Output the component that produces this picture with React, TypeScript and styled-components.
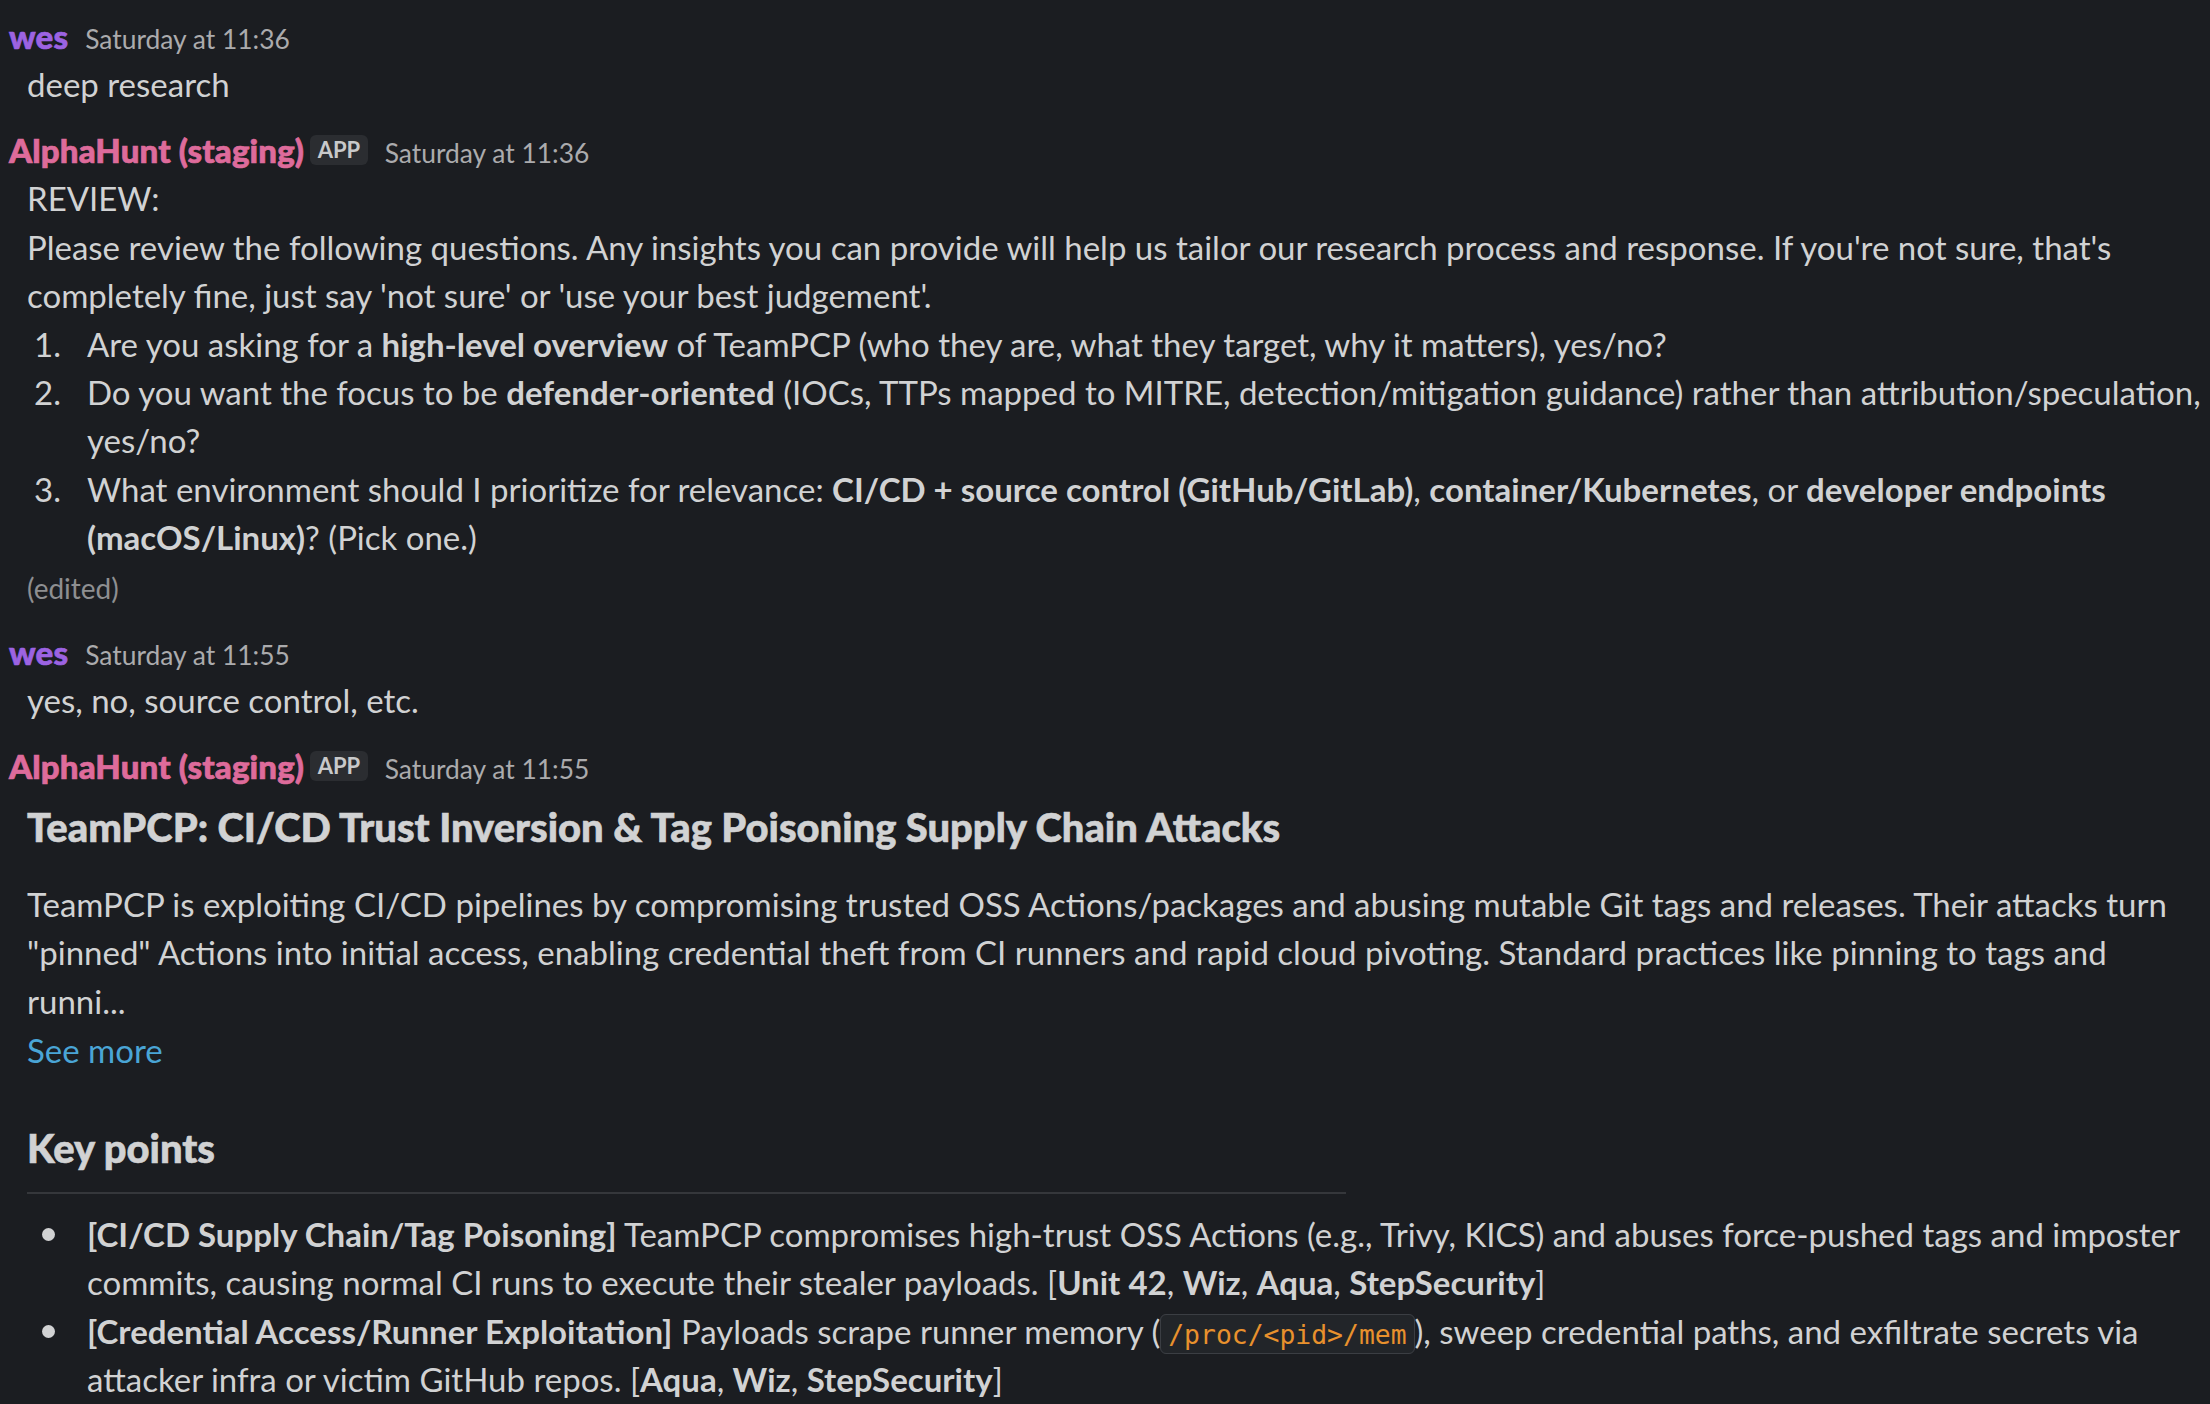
import React from "react";
import styled, { createGlobalStyle } from "styled-components";

const GlobalStyle = createGlobalStyle`
  html, body {
    margin: 0;
    padding: 0;
    background: #1b1d21;
    overflow: hidden;
  }
  body {
    font-family: Lato, "Noto Sans", sans-serif;
    color: #d1d2d3;
  }
`;

const Feed = styled.div`
  display: flex;
  flex-direction: column;
  gap: 18px;
  padding: 12px 5px 0 0;
  width: 2210px;
  height: 1404px;
  box-sizing: border-box;
  overflow: hidden;
`;

const Message = styled.div`
  display: flex;
  flex-direction: column;
`;

const Header = styled.div`
  display: flex;
  align-items: baseline;
  padding-left: 9px;
  height: 48px;
  line-height: 48px;
`;

const Name = styled.span<{ $tone: "user" | "app" }>`
  font-weight: 900;
  font-size: 33px;
  letter-spacing: 0.15px;
  color: ${(p) => (p.$tone === "user" ? "#9c63e2" : "#de6b9b")};
  -webkit-text-stroke: 0.7px currentColor;
`;

const AppBadge = styled.span`
  align-self: center;
  margin-left: 6px;
  padding: 0 7.5px;
  height: 30px;
  line-height: 30px;
  border-radius: 6px;
  background: #2b2d31;
  color: #c8c9ca;
  font-size: 22px;
  font-weight: 700;
`;

const Time = styled.span`
  margin-left: 17px;
  font-size: 26.4px;
  color: #ababad;
`;

const Body = styled.div`
  padding-left: 27px;
  font-size: 33px;
  line-height: 48.4px;
`;

const Line = styled.div``;

const Edited = styled.div`
  margin-top: 5px;
  font-size: 28px;
  line-height: 43px;
  color: #8e8f91;
`;

const List = styled.div`
  display: flex;
  flex-direction: column;
`;

const Item = styled.div`
  display: flex;
`;

const Marker = styled.div<{ $kind: "num" | "dot" }>`
  flex: 0 0 60px;
  display: flex;
  align-items: flex-start;
  justify-content: ${(p) => (p.$kind === "num" ? "flex-end" : "flex-start")};
  padding-right: ${(p) => (p.$kind === "num" ? "26px" : "0")};
  padding-left: ${(p) => (p.$kind === "dot" ? "15px" : "0")};
  box-sizing: border-box;
`;

const Dot = styled.span`
  width: 13px;
  height: 13px;
  margin-top: 18px;
  border-radius: 50%;
  background: #d1d2d3;
`;

const ItemText = styled.div`
  flex: 1;
`;

const Heading = styled.div<{ $gap: number }>`
  margin-top: ${(p) => p.$gap}px;
  font-size: 39.9px;
  line-height: 52px;
  font-weight: 900;
  -webkit-text-stroke: 0.6px currentColor;
`;

const Para = styled.div`
  margin-top: 27px;
`;

const SeeMore = styled.div`
  margin-top: 1px;
  color: #4aa5d6;
`;

const Rule = styled.div`
  margin: 18px 0 16px;
  width: 1319px;
  height: 2px;
  background: #35373b;
`;

const Code = styled.code`
  font-family: "DejaVu Sans Mono", "Liberation Mono", monospace;
  font-size: 26.4px;
  line-height: 26px;
  color: #e8912d;
  background: #222529;
  border: 1px solid #3b3e43;
  border-radius: 6px;
  padding: 4px 7px 3px;
`;

export default function App(): React.ReactElement {
  return (
    <>
      <GlobalStyle />
      <Feed>
        <Message>
          <Header>
            <Name $tone="user">wes</Name>
            <Time>Saturday at 11:36</Time>
          </Header>
          <Body>
            <Line>deep research</Line>
          </Body>
        </Message>

        <Message>
          <Header>
            <Name $tone="app">AlphaHunt (staging)</Name>
            <AppBadge>APP</AppBadge>
            <Time>Saturday at 11:36</Time>
          </Header>
          <Body>
            <Line>REVIEW:</Line>
            <Line>
              Please review the following questions. Any insights you can provide will help us
              tailor our research process and response. If you're not sure, that's completely
              fine, just say 'not sure' or 'use your best judgement'.
            </Line>
            <List>
              <Item>
                <Marker $kind="num">1.</Marker>
                <ItemText>
                  Are you asking for a <b>high-level overview</b> of TeamPCP (who they are, what
                  they target, why it matters), yes/no?
                </ItemText>
              </Item>
              <Item>
                <Marker $kind="num">2.</Marker>
                <ItemText>
                  Do you want the focus to be <b>defender-oriented</b> (IOCs, TTPs mapped to
                  MITRE, detection/mitigation guidance) rather than attribution/speculation,
                  yes/no?
                </ItemText>
              </Item>
              <Item>
                <Marker $kind="num">3.</Marker>
                <ItemText>
                  What environment should I prioritize for relevance:{" "}
                  <b>CI/CD + source control (GitHub/GitLab)</b>, <b>container/Kubernetes</b>, or{" "}
                  <b>developer endpoints (macOS/Linux)</b>? (Pick one.)
                </ItemText>
              </Item>
            </List>
            <Edited>(edited)</Edited>
          </Body>
        </Message>

        <Message>
          <Header>
            <Name $tone="user">wes</Name>
            <Time>Saturday at 11:55</Time>
          </Header>
          <Body>
            <Line>yes, no, source control, etc.</Line>
          </Body>
        </Message>

        <Message>
          <Header>
            <Name $tone="app">AlphaHunt (staging)</Name>
            <AppBadge>APP</AppBadge>
            <Time>Saturday at 11:55</Time>
          </Header>
          <Body>
            <Heading $gap={11}>
              TeamPCP: CI/CD Trust Inversion &amp; Tag Poisoning Supply Chain Attacks
            </Heading>
            <Para>
              TeamPCP is exploiting CI/CD pipelines by compromising trusted OSS Actions/packages
              and abusing mutable Git tags and releases. Their attacks turn "pinned" Actions into
              initial access, enabling credential theft from CI runners and rapid cloud pivoting.
              Standard practices like pinning to tags and runni...
            </Para>
            <SeeMore>See more</SeeMore>
            <Heading $gap={47}>Key points</Heading>
            <Rule />
            <List>
              <Item>
                <Marker $kind="dot">
                  <Dot />
                </Marker>
                <ItemText>
                  <b>[CI/CD Supply Chain/Tag Poisoning]</b> TeamPCP compromises high-trust OSS
                  Actions (e.g., Trivy, KICS) and abuses force-pushed tags and imposter commits,
                  causing normal CI runs to execute their stealer payloads. [<b>Unit 42</b>,{" "}
                  <b>Wiz</b>, <b>Aqua</b>, <b>StepSecurity</b>]
                </ItemText>
              </Item>
              <Item>
                <Marker $kind="dot">
                  <Dot />
                </Marker>
                <ItemText>
                  <b>[Credential Access/Runner Exploitation]</b> Payloads scrape runner memory (
                  <Code>/proc/&lt;pid&gt;/mem</Code>), sweep credential paths, and exfiltrate
                  secrets via attacker infra or victim GitHub repos. [<b>Aqua</b>, <b>Wiz</b>,{" "}
                  <b>StepSecurity</b>]
                </ItemText>
              </Item>
            </List>
          </Body>
        </Message>
      </Feed>
    </>
  );
}
